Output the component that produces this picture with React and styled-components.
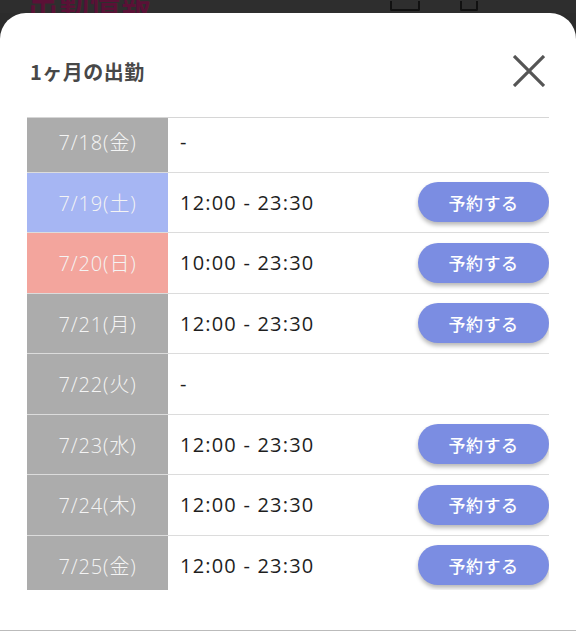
import React, { useLayoutEffect, useRef } from "react";
import styled, { createGlobalStyle } from "styled-components";

const Global = createGlobalStyle`
  html, body { margin: 0; padding: 0; }
  body {
    background: #2c2c2c;
    font-family: "Noto Sans CJK JP", "Noto Sans", sans-serif;
    overflow: hidden;
  }
`;

const Backdrop = styled.div`
  height: 13px;
  overflow: hidden;
  display: flex;
  align-items: flex-end;
  justify-content: space-between;
  padding: 0 28px;
  background: #2e2e2e;
`;

const BackTitle = styled.div`
  font-size: 30px;
  font-weight: 700;
  line-height: 30px;
  margin-bottom: -4px;
  color: #5a1136;
  letter-spacing: 1px;
`;

const BackIcons = styled.div`
  display: flex;
  gap: 40px;
  align-items: flex-end;
  margin-right: 70px;
`;

const BackIcon = styled.div`
  width: ${(p) => p.$w}px;
  height: 8px;
  border: 2px solid #111;
  border-top: none;
  border-radius: 0 0 2px 2px;
  margin-bottom: 2px;
`;

const Sheet = styled.div`
  height: 618px;
  box-sizing: border-box;
  background: #fff;
  border-radius: 26px 26px 0 0;
  border-bottom: 1px solid #bbb;
  padding: 36px 27px 0;
`;

const Header = styled.div`
  display: flex;
  align-items: center;
  justify-content: space-between;
  height: 44px;
  margin-bottom: 24px;
`;

const Title = styled.h2`
  margin: 0;
  padding-left: 3px;
  font-size: 20px;
  font-weight: 600;
  color: #484848;
  letter-spacing: 0.5px;
`;

const CloseButton = styled.button`
  border: none;
  background: none;
  padding: 0;
  margin-right: -2px;
  width: 44px;
  height: 44px;
  display: flex;
  align-items: center;
  justify-content: center;
  cursor: pointer;
`;

const ScrollArea = styled.div`
  border-top: 1px solid #d6d6d6;
  height: 472px;
  overflow-y: auto;
  scrollbar-width: none;
  &::-webkit-scrollbar { display: none; }
`;

const Row = styled.div`
  box-sizing: border-box;
  display: grid;
  grid-template-columns: 141px 1fr auto;
  align-items: center;
  height: 60.5px;
  border-top: ${(p) => (p.$first ? "none" : "1px solid #dcdcdc")};
`;

const DateCell = styled.div`
  align-self: stretch;
  display: flex;
  align-items: center;
  justify-content: center;
  background: ${(p) => p.$bg};
  color: #f4f4f4;
  font-family: "Open Sans", "Noto Sans CJK JP", sans-serif;
  font-size: 20px;
  font-weight: 300;
  letter-spacing: 0.9px;
`;

const TimeCell = styled.div`
  padding-left: 12px;
  font-family: "Open Sans", "Noto Sans CJK JP", sans-serif;
  font-size: 20px;
  color: #1e1e1e;
  font-weight: 400;
  letter-spacing: 1.2px;
`;

const ReserveButton = styled.button`
  width: 131px;
  height: 40px;
  border: none;
  border-radius: 20px;
  background: #7b8de2;
  color: #fff;
  font-family: inherit;
  font-size: 17px;
  font-weight: 500;
  letter-spacing: 0.5px;
  box-shadow: 0 3px 4px rgba(0, 0, 0, 0.28);
  cursor: pointer;
`;

const colors = {
  weekday: "#acacac",
  sat: "#a6b6f3",
  sun: "#f3a59d",
};

const rows = [
  { date: "7/18(金)", kind: "weekday", time: null },
  { date: "7/19(土)", kind: "sat", time: "12:00 - 23:30" },
  { date: "7/20(日)", kind: "sun", time: "10:00 - 23:30" },
  { date: "7/21(月)", kind: "weekday", time: "12:00 - 23:30" },
  { date: "7/22(火)", kind: "weekday", time: null },
  { date: "7/23(水)", kind: "weekday", time: "12:00 - 23:30" },
  { date: "7/24(木)", kind: "weekday", time: "12:00 - 23:30" },
  { date: "7/25(金)", kind: "weekday", time: "12:00 - 23:30" },
];

export default function App() {
  const scrollRef = useRef(null);
  useLayoutEffect(() => {
    if (scrollRef.current) scrollRef.current.scrollTop = 7;
  }, []);
  return (
    <>
      <Global />
      <Backdrop>
        <BackTitle>出勤情報</BackTitle>
        <BackIcons>
          <BackIcon $w={26} />
          <BackIcon $w={14} />
        </BackIcons>
      </Backdrop>
      <Sheet>
        <Header>
          <Title>1ヶ月の出勤</Title>
          <CloseButton aria-label="閉じる">
            <svg width="32" height="32" viewBox="0 0 32 32">
              <path
                d="M1 1 L31 31 M31 1 L1 31"
                stroke="#555"
                strokeWidth="3.2"
                fill="none"
              />
            </svg>
          </CloseButton>
        </Header>
        <ScrollArea ref={scrollRef}>
          {rows.map((r, i) => (
            <Row key={r.date} $first={i === 0}>
              <DateCell $bg={colors[r.kind]}>{r.date}</DateCell>
              <TimeCell>{r.time || "-"}</TimeCell>
              {r.time ? <ReserveButton>予約する</ReserveButton> : <span />}
            </Row>
          ))}
        </ScrollArea>
      </Sheet>
    </>
  );
}
